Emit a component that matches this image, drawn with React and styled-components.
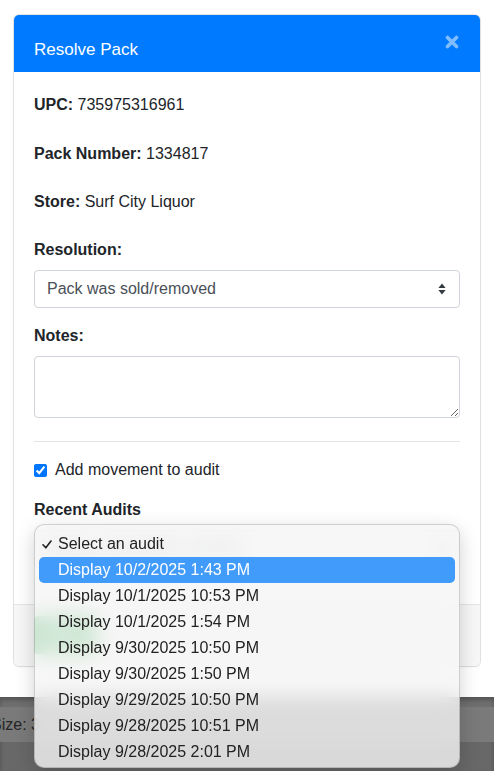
import React from 'react'
import styled, { createGlobalStyle } from 'styled-components'

const GlobalStyle = createGlobalStyle`
  * { box-sizing: border-box; }
  body {
    margin: 0;
    background: #fff;
    font-family: "Liberation Sans", Arial, sans-serif;
    color: #212529;
  }
`

const Page = styled.div`
  position: relative;
  width: 494px;
  height: 771px;
  overflow: hidden;
  display: flex;
  flex-direction: column;
`

const Stage = styled.div`
  height: 697px;
  padding: 15px 14px 0;
  background: #fff;
`

const Modal = styled.div`
  background: #fff;
  border-radius: 5px;
  overflow: hidden;
  box-shadow: 0 0 0 1px rgba(0, 0, 0, 0.1), 0 1px 3px rgba(0, 0, 0, 0.05);
`

const Header = styled.div`
  height: 57px;
  background: #007bff;
  display: flex;
  justify-content: space-between;
  align-items: flex-start;
  padding: 0 20px;
`

const Title = styled.h5`
  margin: 23px 0 0;
  font-size: 17px;
  font-weight: 400;
  line-height: 24px;
  color: #fff;
`

const Close = styled.button`
  margin-top: 20px;
  margin-right: 1px;
  padding: 0;
  border: none;
  background: none;
  display: flex;
  cursor: pointer;
`

const Body = styled.div`
  padding: 21px 20px 20px;
  font-size: 16px;
  line-height: 24px;
`

const Info = styled.p`
  margin: 0 0 ${p => p.$mb || 24}px;
  b { font-weight: 700; }
`

const FieldLabel = styled.div`
  font-weight: 700;
  margin-bottom: 8px;
`

const SelectBox = styled.div`
  height: 38px;
  border: 1px solid #ced4da;
  border-radius: 4px;
  display: flex;
  align-items: center;
  justify-content: space-between;
  padding: 0 13px 0 12px;
  color: #495057;
  margin-bottom: 16px;
`

const Notes = styled.textarea`
  display: block;
  width: 100%;
  height: 62px;
  border: 1px solid #ced4da;
  border-radius: 4px;
  margin: 0 0 23px;
  font: inherit;
`

const Rule = styled.hr`
  margin: 0 0 16px;
  border: 0;
  border-top: 1px solid #e3e5e8;
`

const CheckRow = styled.label`
  display: flex;
  align-items: center;
  gap: 8px;
  margin-bottom: 16px;

  input {
    width: 13px;
    height: 13px;
    margin: 0;
    accent-color: #0075ff;
  }
`

const Footer = styled.div`
  background: #f7f7f7;
  border-top: 1px solid #e6e6e6;
  padding: 11px 20px 12px;
  display: flex;
`

const SaveButton = styled.button`
  height: 38px;
  width: 62px;
  border: none;
  border-radius: 4px;
  background: #28a745;
  color: #fff;
  font: inherit;
  font-size: 14px;
`

const Backdrop = styled.div`
  flex: 1;
  background: #686868;
  display: flex;
  flex-direction: column;
  padding-top: 10px;
  box-shadow: inset 0 3px 4px rgba(0, 0, 0, 0.25);
  background-image: linear-gradient(#6f6f6f, #6f6f6f);
  background-size: 100% 10px;
  background-repeat: no-repeat;
`

const BackdropRow = styled.div`
  height: 35px;
  background: #7a7a7a;
  display: flex;
  align-items: center;
  margin-left: -9px;
  font-size: 16px;
  color: #262626;
`

const Popup = styled.div`
  position: absolute;
  left: 34px;
  top: 524px;
  width: 426px;
  height: 244px;
  padding: 6px 4px 3px;
  border: 1px solid rgba(0, 0, 0, 0.16);
  border-radius: 10px;
  background: rgba(245, 245, 245, 0.8);
  backdrop-filter: blur(10px);
  box-shadow: 0 6px 20px rgba(0, 0, 0, 0.18);
  font-size: 16px;
`

const Option = styled.div`
  height: 26px;
  display: grid;
  grid-template-columns: 19px 1fr;
  align-items: center;
  border-radius: 5px;
  background: ${p => (p.$active ? '#409bfb' : 'transparent')};
  color: ${p => (p.$active ? '#fff' : '#222')};
`

const Tick = styled.span`
  display: flex;
  justify-content: flex-end;
  padding-right: 6px;
`

const audits = [
  'Display 10/2/2025 1:43 PM',
  'Display 10/1/2025 10:53 PM',
  'Display 10/1/2025 1:54 PM',
  'Display 9/30/2025 10:50 PM',
  'Display 9/30/2025 1:50 PM',
  'Display 9/29/2025 10:50 PM',
  'Display 9/28/2025 10:51 PM',
  'Display 9/28/2025 2:01 PM',
]

const Caret = () => (
  <svg width="8" height="12" viewBox="0 0 8 12">
    <path d="M4 0.5 L7.6 5 L0.4 5 Z" fill="#343a40" />
    <path d="M4 11.5 L7.6 7 L0.4 7 Z" fill="#343a40" />
  </svg>
)

const App = () => {
  return (
    <Page>
      <GlobalStyle />
      <Stage>
        <Modal>
          <Header>
            <Title>Resolve Pack</Title>
            <Close aria-label="Close">
              <svg width="14" height="14" viewBox="0 0 14 14">
                <path d="M2.5 2.5 L11.5 11.5 M11.5 2.5 L2.5 11.5" stroke="#80bdff" strokeWidth="3.6" strokeLinecap="round" />
              </svg>
            </Close>
          </Header>

          <Body>
            <Info $mb={25}><b>UPC:</b> 735975316961</Info>
            <Info><b>Pack Number:</b> 1334817</Info>
            <Info><b>Store:</b> Surf City Liquor</Info>

            <FieldLabel>Resolution:</FieldLabel>
            <SelectBox>
              <span>Pack was sold/removed</span>
              <Caret />
            </SelectBox>

            <FieldLabel>Notes:</FieldLabel>
            <Notes />

            <Rule />

            <CheckRow>
              <input type="checkbox" defaultChecked />
              Add movement to audit
            </CheckRow>

            <FieldLabel>Recent Audits</FieldLabel>
            <SelectBox>
              <span>Display 10/2/2025 1:43 PM</span>
              <Caret />
            </SelectBox>
          </Body>

          <Footer>
            <SaveButton>Save</SaveButton>
          </Footer>
        </Modal>
      </Stage>

      <Backdrop>
        <BackdropRow>Size: 3</BackdropRow>
      </Backdrop>

      <Popup>
        <Option>
          <Tick>
            <svg width="10" height="9" viewBox="0 0 10 9">
              <path d="M1 4.8 L3.8 7.8 L9 1" fill="none" stroke="#222" strokeWidth="1.6" strokeLinecap="round" strokeLinejoin="round" />
            </svg>
          </Tick>
          <span>Select an audit</span>
        </Option>
        {audits.map((a, i) => (
          <Option key={a} $active={i === 0}>
            <span />
            <span>{a}</span>
          </Option>
        ))}
      </Popup>
    </Page>
  )
}

export default App
